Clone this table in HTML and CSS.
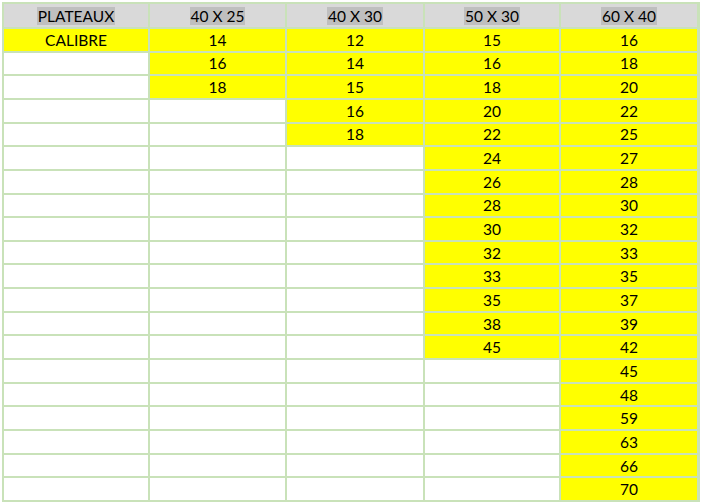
FILE: index.html
```html
<!DOCTYPE html>
<html>
<head>
<meta charset="utf-8">
<link rel="stylesheet" href="styles.css">
</head>
<body>
<div class="sheet">
  <div class="c h"><span>PLATEAUX</span></div>
  <div class="c h"><span>40 X 25</span></div>
  <div class="c h"><span>40 X 30</span></div>
  <div class="c h"><span>50 X 30</span></div>
  <div class="c h"><span>60 X 40</span></div>

  <div class="c y">CALIBRE</div><div class="c y">14</div><div class="c y">12</div><div class="c y">15</div><div class="c y">16</div>
  <div class="c"></div><div class="c y">16</div><div class="c y">14</div><div class="c y">16</div><div class="c y">18</div>
  <div class="c"></div><div class="c y">18</div><div class="c y">15</div><div class="c y">18</div><div class="c y">20</div>
  <div class="c"></div><div class="c"></div><div class="c y">16</div><div class="c y">20</div><div class="c y">22</div>
  <div class="c"></div><div class="c"></div><div class="c y">18</div><div class="c y">22</div><div class="c y">25</div>
  <div class="c"></div><div class="c"></div><div class="c"></div><div class="c y">24</div><div class="c y">27</div>
  <div class="c"></div><div class="c"></div><div class="c"></div><div class="c y">26</div><div class="c y">28</div>
  <div class="c"></div><div class="c"></div><div class="c"></div><div class="c y">28</div><div class="c y">30</div>
  <div class="c"></div><div class="c"></div><div class="c"></div><div class="c y">30</div><div class="c y">32</div>
  <div class="c"></div><div class="c"></div><div class="c"></div><div class="c y">32</div><div class="c y">33</div>
  <div class="c"></div><div class="c"></div><div class="c"></div><div class="c y">33</div><div class="c y">35</div>
  <div class="c"></div><div class="c"></div><div class="c"></div><div class="c y">35</div><div class="c y">37</div>
  <div class="c"></div><div class="c"></div><div class="c"></div><div class="c y">38</div><div class="c y">39</div>
  <div class="c"></div><div class="c"></div><div class="c"></div><div class="c y">45</div><div class="c y">42</div>
  <div class="c"></div><div class="c"></div><div class="c"></div><div class="c"></div><div class="c y">45</div>
  <div class="c"></div><div class="c"></div><div class="c"></div><div class="c"></div><div class="c y">48</div>
  <div class="c"></div><div class="c"></div><div class="c"></div><div class="c"></div><div class="c y">59</div>
  <div class="c"></div><div class="c"></div><div class="c"></div><div class="c"></div><div class="c y">63</div>
  <div class="c"></div><div class="c"></div><div class="c"></div><div class="c"></div><div class="c y">66</div>
  <div class="c"></div><div class="c"></div><div class="c"></div><div class="c"></div><div class="c y">70</div>
</div>
</body>
</html>
```
FILE: styles.css
```css
html, body {
  margin: 0;
  padding: 0;
  background: #ffffff;
}
.sheet {
  margin: 2px;
  width: 698px;
  height: 500px;
  box-sizing: border-box;
  padding: 2px;
  background: #c9e2b9;
  display: grid;
  grid-template-columns: 144px 135px 136px 134px 136px;
  grid-template-rows: 23px repeat(20, 1fr);
  gap: 2px;
  font-family: Lato, "Open Sans", sans-serif;
  font-size: 15.5px;
  color: #000;
}
.c {
  background: #ffffff;
  display: flex;
  align-items: center;
  justify-content: center;
  line-height: 18px;
}
.y {
  background: #ffff00;
}
.h {
  background: #d9d9d9;
}
.h span {
  background: #bfbfbf;
  padding: 0 1px;
}
```
